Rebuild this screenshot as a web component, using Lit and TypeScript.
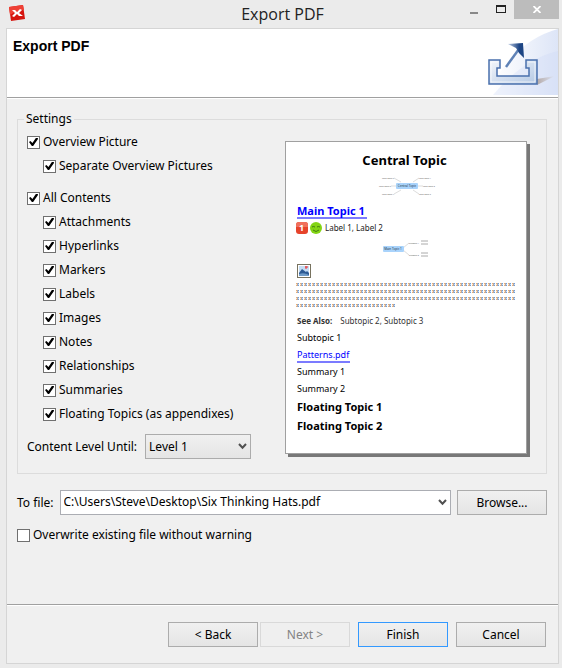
import { LitElement, html, css, svg } from "lit";
import { customElement, property } from "lit/decorators.js";

const base = css`
  * { box-sizing: border-box; }
  button, input, select { font: inherit; color: inherit; margin: 0; }
`;

const chevron = html`<svg class="chevron" width="9" height="7" viewBox="0 0 9 7" aria-hidden="true">
  <path d="M1 1 4.5 4.8 8 1" fill="none" stroke="#505050" stroke-width="2" />
</svg>`;

@customElement("check-option")
class CheckOption extends LitElement {
  @property() label = "";
  @property({ type: Boolean }) checked = false;

  static styles = [base, css`
    :host { display: block; }
    label { display: flex; align-items: center; gap: 3px; height: 24px; white-space: nowrap; }
    input {
      appearance: none; flex: none; width: 13px; height: 13px;
      border: 1px solid #707070; background: #fff; display: grid; place-items: center;
    }
    input:checked::before {
      content: ""; width: 9px; height: 9px; background: #000;
      clip-path: polygon(0 50%, 16% 38%, 38% 60%, 78% 4%, 100% 4%, 98% 20%, 46% 94%, 32% 94%);
    }
  `];

  render() {
    return html`<label><input type="checkbox" .checked=${this.checked} />${this.label}</label>`;
  }
}

interface MapNode { x: number; y: number; text: string; }

const overviewNodes: MapNode[] = [
  { x: 11, y: 4, text: "Main Topic 6" }, { x: 48, y: 4, text: "Main Topic 1" },
  { x: 8, y: 12, text: "Main Topic 5" }, { x: 52, y: 12, text: "Main Topic 2" },
  { x: 11, y: 20, text: "Main Topic 4" }, { x: 48, y: 20, text: "Main Topic 3" },
];

@customElement("page-preview")
class PagePreview extends LitElement {
  static styles = [base, css`
    :host {
      display: block; background: #fff; border: 1px solid #a0a0a0; box-shadow: 3px 3px 0 #787878;
      padding: 9px 10px 0 11px; color: #000; font-size: 9px; line-height: 17px;
    }
    .title { margin: 0; padding-right: 4px; font-size: 13px; line-height: 18px; font-weight: 700; text-align: center; }
    .map { display: block; margin: 5px auto 0; }
    .node { font-size: 2px; fill: #555; text-anchor: middle; }
    .strong { font-size: 3px; fill: #234; }
    .main { display: table; font-size: 11px; line-height: 13px; font-weight: 700; margin-top: 6px; padding-right: 2px; }
    a { color: #00f; text-decoration: none; border-bottom: 2px solid #7b7bff; }
    .tags { display: flex; align-items: center; gap: 2px; font-size: 8px; line-height: 14px; margin-top: 2px; color: #222; }
    .tags svg { margin-left: -1px; }
    .tags + .map { margin-top: 4px; }
    .picture { display: block; margin-top: 5px; }
    .note { display: block; margin: 5px 0 0 -1px; }
    .also { display: flex; gap: 8px; font-size: 8px; line-height: 14px; margin: 6px 0 1px; color: #333; }
    .file { display: table; line-height: 12px; margin-top: 3px; padding-right: 1px; }
    .topic { font-size: 11px; line-height: 19px; font-weight: 700; }
  `];

  render() {
    return html`
      <h2 class="title">Central Topic</h2>
      <svg class="map" width="60" height="24" viewBox="0 0 60 24">
        <path d="M17 4 24 8M42 4 36 8M14 12H20M40 12H46M17 20 24 16M42 20 36 16" stroke="#ddd" fill="none" />
        <rect x="19" y="9" width="22" height="6" rx="1" fill="#a9d3fb" />
        <text class="node strong" x="30" y="13">Central Topic</text>
        ${overviewNodes.map((n) => svg`<text class="node" x=${n.x} y=${n.y + 1}>${n.text}</text>`)}
      </svg>
      <a class="main" href="#main-topic-1">Main Topic 1</a>
      <div class="tags">
        <svg width="27" height="14" viewBox="0 0 27 14">
          <rect x="0" y="1" width="12" height="12" rx="3" fill="#e6432b" />
          <path d="M3 1h6q3 0 3 3v2H0V4q0-3 3-3z" fill="#f0705c" />
          <text x="3" y="10" font-size="9" font-weight="700" fill="#fff">1</text>
          <circle cx="20" cy="7" r="6" fill="#83d414" />
          <path d="M16 6q1-1 3 0M21 6q1-1 3 0M17 9q3 3 6 0" stroke="#3f7d10" fill="none" />
        </svg>
        <span>Label 1, Label 2</span>
      </div>
      <svg class="map" width="48" height="20" viewBox="0 0 48 20">
        <path d="M20 9 26 4M20 11 26 16" stroke="#ddd" />
        <rect x="0" y="7" width="21" height="6" rx="1" fill="#a9d3fb" />
        <text class="node strong" x="10" y="11">Main Topic 1</text>
        <text class="node" x="31" y="5">Subtopic 1</text><text class="node" x="31" y="17">Subtopic 2</text>
        <path d="M38 2h7M38 5h7M38 14h7M38 17h7" stroke="#aaa" />
      </svg>
      <svg class="picture" width="14" height="14" viewBox="0 0 14 14">
        <rect x=".5" y=".5" width="13" height="13" fill="#fff" stroke="#77725f" />
        <rect x="2" y="2" width="10" height="10" fill="#c4dcf4" />
        <path d="M2 9 5 5 9 8 10 7 12 9V12H2z" fill="#2d5a94" />
        <path d="M2 10q5-2 10 1v1H2z" fill="#6f9bc8" /><path d="M9 2v3M8 3h3" stroke="#e33" />
      </svg>
      <svg class="note" width="220" height="25">
        <defs><pattern id="glyphs" width="4" height="7" patternUnits="userSpaceOnUse">
          <path d="M0 0h1v1h-1zM0 2h1v1h-1z" fill="#f0b070" /><path d="M1 0h1v3h-1z" fill="#b3a7a7" />
          <path d="M2 0h1v1h-1zM2 2h1v1h-1z" fill="#6aa0e0" /><path d="M0 1h1v1h-1z" fill="#fbe6cf" /><path d="M2 1h1v1h-1z" fill="#c9def5" />
        </pattern></defs>
        <path d="M0 0H220V21H100V25H0z" fill="url(#glyphs)" />
      </svg>
      <div class="also"><b>See Also:</b><span>Subtopic 2, Subtopic 3</span></div>
      <div>Subtopic 1</div>
      <a class="file" href="#patterns">Patterns.pdf</a>
      <div>Summary 1</div>
      <div>Summary 2</div>
      <div class="topic">Floating Topic 1</div>
      <div class="topic">Floating Topic 2</div>`;
  }
}

@customElement("app-root")
class AppRoot extends LitElement {
  static styles = [base, css`
    :host {
      display: flex; flex-direction: column; min-height: 100vh; box-sizing: border-box; padding: 0 3px 4px 6px;
      background: #ebebeb; color: #000; font: 12px/16px "Noto Sans", "Open Sans", sans-serif;
    }
    .titlebar { display: grid; grid-template-columns: 1fr auto 1fr; height: 28px; }
    .logo { margin: 4px 0 0 3px; }
    .caption { margin: 0; font: 16px/28px "Open Sans", sans-serif; color: #222; }
    .window-buttons { display: flex; justify-content: flex-end; align-items: flex-start; }
    .window-buttons button { border: 0; padding: 0; width: 27px; height: 19px; background: none; display: grid; place-items: center; }
    .window-buttons .close { width: 45px; background: #bcbcbc; }
    .frame { flex: 1; display: flex; flex-direction: column; border: 1px solid #d5d5d5; background: #f0f0f0; }
    .banner { display: flex; justify-content: space-between; height: 69px; background: #fff; border-bottom: 1px solid #a0a0a0; box-shadow: 0 1px #fff; }
    .banner h1 { margin: 9px 0 0 6px; font: bold 14px/17px "Liberation Sans", sans-serif; }
    .body { flex: 1; padding: 13px 11px 0 10px; }
    fieldset {
      margin: 0; padding: 3px 19px 14px 9px; border: 1px solid #dcdcdc; min-width: 0;
      display: flex; justify-content: space-between; align-items: flex-start; gap: 12px;
    }
    legend { padding: 0 2px; margin-left: -3px; }
    .nested { padding-left: 16px; }
    .nested + check-option { margin-top: 8px; }
    .level { display: flex; align-items: center; gap: 8px; margin-top: 8px; }
    .select { display: grid; align-items: center; width: 106px; }
    .select select, .select .chevron { grid-area: 1 / 1; }
    .chevron { justify-self: end; margin-right: 4px; pointer-events: none; }
    select { appearance: none; width: 100%; height: 25px; padding: 0 3px; border: 1px solid #acacac; border-radius: 0; background: linear-gradient(#f0f0f0, #e5e5e5); }
    page-preview { width: 242px; height: 313px; margin-top: 11px; }
    .destination { display: flex; align-items: center; gap: 6px; margin-top: 16px; }
    .combo { flex: 1; display: flex; height: 25px; background: #fff; border: 1px solid #abadb3; }
    .combo input { flex: 1; min-width: 0; border: 0; padding: 0 3px 2px; background: none; outline: 0; }
    .combo button { border: 0; padding: 0; width: 16px; background: none; display: grid; place-items: center; }
    .combo .chevron { margin: 0; justify-self: center; }
    .push { width: 90px; height: 25px; padding: 0; border: 1px solid #acacac; background: linear-gradient(#f0f0f0, #e5e5e5); }
    .push:disabled { color: #838383; border-color: #d9d9d9; background: #efefef; }
    .push.default { border-color: #3399ff; }
    .overwrite { margin-top: 8px; }
    footer { display: flex; justify-content: flex-end; gap: 8px; border-top: 1px solid #a0a0a0; box-shadow: inset 0 1px #fff; padding: 17px 12px 16px; }
    .steps { display: flex; gap: 2px; }
  `];

  private parts = ["Attachments", "Hyperlinks", "Markers", "Labels", "Images", "Notes",
    "Relationships", "Summaries", "Floating Topics (as appendixes)"];

  render() {
    return html`
      <header class="titlebar">
        <svg class="logo" width="16" height="17" viewBox="0 0 16 17" aria-hidden="true">
          <path d="M0 3 14 1 16 15 2 17z" fill="#d6150f" />
          <path d="M0 3 14 1 15 6Q8 6 1 11z" fill="#ee4035" />
          <path d="M3 6 6 6 8 8 11 5 13 6 10 9 14 12 10 12 8 10 5 13 3 12 6 9z" fill="#fff" />
        </svg>
        <p class="caption">Export PDF</p>
        <div class="window-buttons">
          <button aria-label="Minimize"><svg width="8" height="12"><path d="M0 8h8v2H0z" fill="#888" /></svg></button>
          <button aria-label="Maximize"><svg width="10" height="9"><path d="M0 0h10v8H0zM1 2v5h8V2z" fill="#222" fill-rule="evenodd" /></svg></button>
          <button class="close" aria-label="Close"><svg width="8" height="7"><path d="M.5 0 7.500 7M7.500 0 .5 7" stroke="#fff" stroke-width="1.800" /></svg></button>
        </div>
      </header>
      <main class="frame">
        <div class="banner">
          <h1>Export PDF</h1>
          <svg width="75" height="66" viewBox="0 0 75 66" aria-hidden="true">
            <defs>
              <linearGradient id="sky" x1="0" y1="0" x2="1" y2="0"><stop offset="0.100" stop-color="#fff" /><stop offset="1" stop-color="#dde5f7" /></linearGradient>
              <linearGradient id="tray" x1="0" y1="0" x2="1" y2="1"><stop offset="0" stop-color="#f4f7fb" /><stop offset="1" stop-color="#b4c8e4" /></linearGradient>
              <linearGradient id="tip" x1="0" y1="0" x2="1" y2="0"><stop offset="0" stop-color="#bccbe3" /><stop offset=".7" stop-color="#1d4584" /></linearGradient>
              <linearGradient id="shade" x1="0" y1="0" x2="1" y2="0"><stop offset="0" stop-color="#b5aaa8" /><stop offset="1" stop-color="#dde5f7" /></linearGradient>
            </defs>
            <path d="M75 0Q30 12 4 66H75z" fill="url(#sky)" />
            <path d="M75 22Q40 30 10 66H75z" fill="#cddaf5" opacity=".35" />
            <path d="M54 50 72 47 54 56z" fill="url(#shade)" />
            <path d="M6 31H17V39H14V47H46V39H43V31H54V55H6z" fill="url(#tray)" stroke="#4a70ad" stroke-width="1.500" />
            <path d="M8 33H15M8 33V53H52V33H45" fill="none" stroke="#fff" opacity=".7" />
            <path d="M23 38 36 20" stroke="#5f82b6" stroke-width="2.500" />
            <path d="M25 15 40 14 41 29 36 24 33 19z" fill="url(#tip)" />
          </svg>
        </div>
        <div class="body">
          <fieldset>
            <legend>Settings</legend>
            <div>
              <check-option label="Overview Picture" checked></check-option>
              <check-option class="nested" label="Separate Overview Pictures" checked></check-option>
              <check-option label="All Contents" checked></check-option>
              <div class="nested">
                ${this.parts.map((p) => html`<check-option label=${p} checked></check-option>`)}
              </div>
              <div class="level">
                <label for="level">Content Level Until:</label>
                <span class="select"><select id="level"><option>Level 1</option></select>${chevron}</span>
              </div>
            </div>
            <page-preview></page-preview>
          </fieldset>
          <div class="destination">
            <label for="file">To file:</label>
            <div class="combo">
              <input id="file" type="text" value="C:\\Users\\Steve\\Desktop\\Six Thinking Hats.pdf" />
              <button aria-label="Recent files">${chevron}</button>
            </div>
            <button class="push">Browse...</button>
          </div>
          <check-option class="overwrite" label="Overwrite existing file without warning"></check-option>
        </div>
        <footer>
          <div class="steps"><button class="push">&lt; Back</button><button class="push" disabled>Next &gt;</button></div>
          <button class="push default">Finish</button>
          <button class="push">Cancel</button>
        </footer>
      </main>`;
  }
}
